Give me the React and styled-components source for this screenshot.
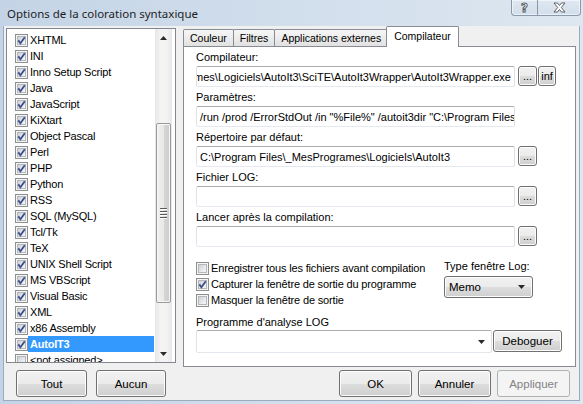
import React from "react";
import styled, { createGlobalStyle } from "styled-components";

const languages = [
  "XHTML",
  "INI",
  "Inno Setup Script",
  "Java",
  "JavaScript",
  "KiXtart",
  "Object Pascal",
  "Perl",
  "PHP",
  "Python",
  "RSS",
  "SQL (MySQL)",
  "Tcl/Tk",
  "TeX",
  "UNIX Shell Script",
  "MS VBScript",
  "Visual Basic",
  "XML",
  "x86 Assembly",
  "AutoIT3",
  "<not assigned>",
];

const fields = [
  {
    label: "Compilateur:",
    value: "C:\\Program Files\\_MesProgrames\\Logiciels\\AutoIt3\\SciTE\\AutoIt3Wrapper\\AutoIt3Wrapper.exe",
    alignEnd: true,
    extra: "inf",
  },
  {
    label: "Paramètres:",
    value: '/run /prod /ErrorStdOut /in "%File%" /autoit3dir "C:\\Program Files\\_MesProgrames\\Logiciels\\AutoIt3"',
  },
  {
    label: "Répertoire par défaut:",
    value: "C:\\Program Files\\_MesProgrames\\Logiciels\\AutoIt3",
    browse: true,
  },
  { label: "Fichier LOG:", value: "", browse: true },
  { label: "Lancer après la compilation:", value: "", browse: true },
];

const options = [
  { label: "Enregistrer tous les fichiers avant compilation", checked: false },
  { label: "Capturer la fenêtre de sortie du programme", checked: true },
  { label: "Masquer la fenêtre de sortie", checked: false },
];

const GlobalStyle = createGlobalStyle`
  html, body {
    margin: 0;
    padding: 0;
    background: #cfdcea;
  }
  body {
    font-family: "Liberation Sans", Arial, sans-serif;
    font-size: 11px;
    color: #000;
  }
  * { box-sizing: border-box; }
`;

const Window = styled.div`
  width: 583px;
  height: 404px;
  display: flex;
  flex-direction: column;
  overflow: hidden;
  background: linear-gradient(90deg, #c4d4e6 0%, #d0ddeb 45%, #dde7f1 100%);
`;

const TitleBar = styled.div`
  height: 26px;
  flex: none;
  display: flex;
  align-items: flex-start;
`;

const Title = styled.div`
  padding: 6px 0 0 7px;
  font-family: "Noto Sans", "Open Sans", sans-serif;
  font-size: 11.5px;
  line-height: 15px;
  color: #1e1e1e;
`;

const Captions = styled.div`
  margin-left: auto;
  margin-right: 2px;
  display: flex;
  height: 16px;
  border: 1px solid #8898ad;
  border-top: none;
  border-radius: 0 0 4px 4px;
  box-shadow: inset 0 0 0 1px rgba(255, 255, 255, 0.55);
  background: linear-gradient(#dfe8f2, #d2deea);
  overflow: hidden;
`;

const CaptionButton = styled.div`
  width: ${(p) => p.$w}px;
  display: flex;
  align-items: center;
  justify-content: center;
  & + & {
    border-left: 1px solid #8898ad;
  }
`;

const HelpGlyph = styled.span`
  font-family: "DejaVu Sans", sans-serif;
  font-weight: bold;
  font-size: 12px;
  line-height: 12px;
  color: #fff;
  -webkit-text-stroke: 1px #5a5f66;
`;

const Client = styled.div`
  flex: 1;
  min-height: 0;
  margin: 0 3px 3px 3px;
  border: 1px solid #9aabbf;
  border-top: none;
  background: #f0f0f0;
  display: grid;
  grid-template-columns: 170px 393px;
  grid-template-rows: minmax(0, 1fr);
  column-gap: 7px;
  padding: 0 3px 0 2px;
`;

const LeftColumn = styled.div`
  display: flex;
  flex-direction: column;
  min-height: 0;
  padding: 2px 0 3px;
`;

const RightColumn = styled.div`
  display: flex;
  flex-direction: column;
  min-height: 0;
  padding-bottom: 3px;
`;

const ListBox = styled.div`
  flex: 1 1 0;
  min-height: 0;
  display: flex;
  border: 1px solid #828790;
  background: #fff;
  overflow: hidden;
`;

const ListItems = styled.div`
  flex: 1;
  overflow: hidden;
  padding-top: 3px;
`;

const ListRow = styled.div`
  height: 16px;
  display: flex;
  align-items: center;
  padding-left: 8px;
`;

const ListLabel = styled.span`
  flex: 1;
  margin-right: 1px;
  height: 16px;
  line-height: 16px;
  padding-left: 2px;
  white-space: nowrap;
  letter-spacing: -0.2px;
  background: ${(p) => (p.$selected ? "#3399ff" : "transparent")};
  color: ${(p) => (p.$selected ? "#fff" : "#000")};
  font-weight: ${(p) => (p.$selected ? "bold" : "normal")};
`;

const ScrollBar = styled.div`
  width: 17px;
  flex: none;
  margin-right: 3px;
  display: flex;
  flex-direction: column;
  background: linear-gradient(90deg, #e6e6e6, #f4f4f4 35%, #f4f4f4 65%, #e8e8e8);
`;

const ScrollArrow = styled.div`
  height: 17px;
  flex: none;
  display: flex;
  align-items: center;
  justify-content: center;
`;

const ScrollSpace = styled.div`
  height: ${(p) => p.$h || 0}px;
  flex: ${(p) => (p.$grow ? 1 : "none")};
`;

const Thumb = styled.div`
  height: 180px;
  flex: none;
  margin: 0 1px;
  border: 1px solid #9a9a9a;
  border-radius: 2px;
  box-shadow: inset 0 0 0 1px #f7f7f7;
  background: linear-gradient(90deg, #f1f1f1 0%, #e9e9e9 50%, #d8d8d8 51%, #cbcbcb 100%);
  display: flex;
  flex-direction: column;
  align-items: center;
  justify-content: center;
  gap: 2px;
`;

const Grip = styled.div`
  width: 7px;
  height: 1px;
  background: #5a5a5a;
  box-shadow: 0 1px 0 #fff;
`;

const Button = styled.div`
  width: ${(p) => p.$w || 73}px;
  height: ${(p) => p.$h || 27}px;
  flex: none;
  display: flex;
  align-items: center;
  justify-content: center;
  border: 1px solid ${(p) => (p.$disabled ? "#adb2b5" : "#707070")};
  border-radius: 3px;
  box-shadow: inset 0 0 0 1px ${(p) => (p.$disabled ? "#f4f4f4" : "#fcfcfc")};
  background: ${(p) =>
    p.$disabled
      ? "#f4f4f4"
      : "linear-gradient(#f2f2f2 0%, #ebebeb 50%, #dddddd 51%, #cfcfcf 100%)"};
  color: ${(p) => (p.$disabled ? "#838383" : "#000")};
  font-size: 11.5px;
  white-space: nowrap;
`;

const ButtonRow = styled.div`
  display: flex;
  flex: none;
  gap: ${(p) => p.$gap}px;
  margin-top: ${(p) => p.$top}px;
  padding: 0 ${(p) => p.$right || 0}px 0 ${(p) => p.$left || 0}px;
  justify-content: ${(p) => (p.$end ? "flex-end" : "flex-start")};
`;

const TabBar = styled.div`
  height: 20px;
  flex: none;
  display: flex;
  align-items: flex-end;
  position: relative;
  z-index: 1;
`;

const Tab = styled.div`
  height: ${(p) => (p.$active ? 21 : 17)}px;
  margin-bottom: ${(p) => (p.$active ? -1 : 0)}px;
  margin-left: ${(p) => (p.$active ? -2 : p.$first ? 0 : -1)}px;
  padding: ${(p) => (p.$active ? "2px 7px 0" : "1px 6px 0")};
  border: 1px solid #898c95;
  border-bottom: none;
  border-radius: 2px 2px 0 0;
  background: ${(p) =>
    p.$active ? "#fff" : "linear-gradient(#f6f6f6 0%, #ececec 50%, #e1e1e1 100%)"};
  font-size: 10.5px;
  line-height: 14px;
  white-space: nowrap;
`;

const Panel = styled.div`
  flex: 1;
  min-height: 0;
  border: 1px solid #898c95;
  background: #fff;
  padding: 3px 0 0 12px;
  display: flex;
  flex-direction: column;
`;

const FieldLabel = styled.div`
  height: 14px;
  line-height: 14px;
  margin-top: ${(p) => p.$top || 0}px;
  white-space: nowrap;
`;

const FieldRow = styled.div`
  display: flex;
  align-items: flex-start;
  margin: 2px 0 3px;
`;

const TextBox = styled.div`
  width: ${(p) => p.$w}px;
  height: ${(p) => p.$h || 21}px;
  flex: none;
  display: flex;
  align-items: center;
  justify-content: ${(p) => (p.$end ? "flex-end" : "flex-start")};
  padding: 0 3px;
  border: 1px solid #abadb3;
  border-color: #abadb3 #dbdfe6 #e3e9ef #e2e3ea;
  border-radius: 2px;
  background: #fff;
  overflow: hidden;
  white-space: nowrap;
`;

const SmallButton = styled(Button)`
  margin-left: ${(p) => p.$gapLeft}px;
  font-size: 11px;
  align-items: ${(p) => (p.$dots ? "flex-end" : "center")};
  padding-bottom: ${(p) => (p.$dots ? 3 : 0)}px;
  line-height: 11px;
`;

const Options = styled.div`
  display: grid;
  grid-template-columns: 248px 1fr;
  margin-top: 9px;
`;

const CheckList = styled.div`
  padding-top: 1px;
`;

const CheckRow = styled.div`
  height: 16px;
  display: flex;
  align-items: center;
  gap: 2px;
  white-space: nowrap;
  letter-spacing: -0.15px;
`;

const LogType = styled.div`
  display: flex;
  flex-direction: column;
  gap: 3px;
`;

const DropButton = styled(Button)`
  justify-content: space-between;
  padding: 0 7px 0 4px;
`;

const ComboRow = styled.div`
  display: flex;
  align-items: flex-start;
  margin-top: 1px;
  gap: 1px;
`;

const Combo = styled(TextBox)`
  justify-content: flex-end;
  padding-right: 6px;
`;

const BoxFrame = styled.span`
  width: 13px;
  height: 13px;
  flex: none;
  position: relative;
  border: 1px solid #8e8f8f;
  background: #f4f4f4;
  padding: 1px;
  display: inline-block;
`;

const BoxFill = styled.span`
  display: block;
  width: 100%;
  height: 100%;
  border: 1px solid #b4b8bd;
  background: linear-gradient(135deg, #cdd1d6 0%, #e6e7e9 55%, #f7f7f7 100%);
`;

const Mark = styled.svg`
  position: absolute;
  left: -1px;
  top: -1px;
`;

function CheckBox({ checked }) {
  return (
    <BoxFrame>
      <BoxFill />
      {checked && (
        <Mark width="13" height="13" viewBox="0 0 13 13">
          <path d="M3.3 6.4 L5.4 9.2 L9.8 3.2" fill="none" stroke="#3a4f8c" strokeWidth="1.8" />
        </Mark>
      )}
    </BoxFrame>
  );
}

function Triangle({ up }) {
  return (
    <svg width="7" height="4" viewBox="0 0 7 4">
      <path d={up ? "M0 4 L3.5 0 L7 4 Z" : "M0 0 L7 0 L3.5 4 Z"} fill="#2b2b2b" />
    </svg>
  );
}

function CloseGlyph() {
  return (
    <svg width="13" height="11" viewBox="0 0 13 11">
      <path
        d="M1 1 H4.5 L6.5 3.5 L8.5 1 H12 L8.3 5.5 L12 10 H8.5 L6.5 7.5 L4.5 10 H1 L4.7 5.5 Z"
        fill="#fff"
        stroke="#5a5f66"
        strokeWidth="1"
        strokeLinejoin="round"
      />
    </svg>
  );
}

export default function App() {
  return (
    <>
      <GlobalStyle />
      <Window>
        <TitleBar>
          <Title>Options de la coloration syntaxique</Title>
          <Captions>
            <CaptionButton $w={25}>
              <HelpGlyph>?</HelpGlyph>
            </CaptionButton>
            <CaptionButton $w={43}>
              <CloseGlyph />
            </CaptionButton>
          </Captions>
        </TitleBar>

        <Client>
          <LeftColumn>
            <ListBox>
              <ListItems>
                {languages.map((name) => (
                  <ListRow key={name}>
                    <CheckBox checked={name !== "<not assigned>"} />
                    <ListLabel $selected={name === "AutoIT3"}>{name}</ListLabel>
                  </ListRow>
                ))}
              </ListItems>
              <ScrollBar>
                <ScrollArrow>
                  <Triangle up />
                </ScrollArrow>
                <ScrollSpace $h={77} />
                <Thumb>
                  <Grip />
                  <Grip />
                  <Grip />
                  <Grip />
                </Thumb>
                <ScrollSpace $grow />
                <ScrollArrow>
                  <Triangle />
                </ScrollArrow>
              </ScrollBar>
            </ListBox>
            <ButtonRow $gap={9} $top={7} $left={10}>
              <Button $w={71}>Tout</Button>
              <Button $w={70}>Aucun</Button>
            </ButtonRow>
          </LeftColumn>

          <RightColumn>
            <TabBar>
              <Tab $first>Couleur</Tab>
              <Tab>Filtres</Tab>
              <Tab>Applications externes</Tab>
              <Tab $active>Compilateur</Tab>
            </TabBar>
            <Panel>
              {fields.map((f) => (
                <div key={f.label}>
                  <FieldLabel>{f.label}</FieldLabel>
                  <FieldRow>
                    <TextBox $w={319} $end={f.alignEnd}>
                      {f.value}
                    </TextBox>
                    {(f.browse || f.extra) && (
                      <SmallButton $w={19} $h={20} $gapLeft={3} $dots>
                        ...
                      </SmallButton>
                    )}
                    {f.extra && (
                      <SmallButton $w={18} $h={20} $gapLeft={1}>
                        {f.extra}
                      </SmallButton>
                    )}
                  </FieldRow>
                </div>
              ))}

              <Options>
                <CheckList>
                  {options.map((o) => (
                    <CheckRow key={o.label}>
                      <CheckBox checked={o.checked} />
                      {o.label}
                    </CheckRow>
                  ))}
                </CheckList>
                <LogType>
                  <FieldLabel>Type fenêtre Log:</FieldLabel>
                  <DropButton $w={89} $h={22}>
                    Memo
                    <Triangle />
                  </DropButton>
                </LogType>
              </Options>

              <FieldLabel $top={7}>Programme d'analyse LOG</FieldLabel>
              <ComboRow>
                <Combo $w={296} $h={23}>
                  <Triangle />
                </Combo>
                <Button $w={69} $h={22}>
                  Deboguer
                </Button>
              </ComboRow>
            </Panel>
            <ButtonRow $gap={6} $top={3} $right={6} $end>
              <Button>OK</Button>
              <Button>Annuler</Button>
              <Button $disabled>Appliquer</Button>
            </ButtonRow>
          </RightColumn>
        </Client>
      </Window>
    </>
  );
}
